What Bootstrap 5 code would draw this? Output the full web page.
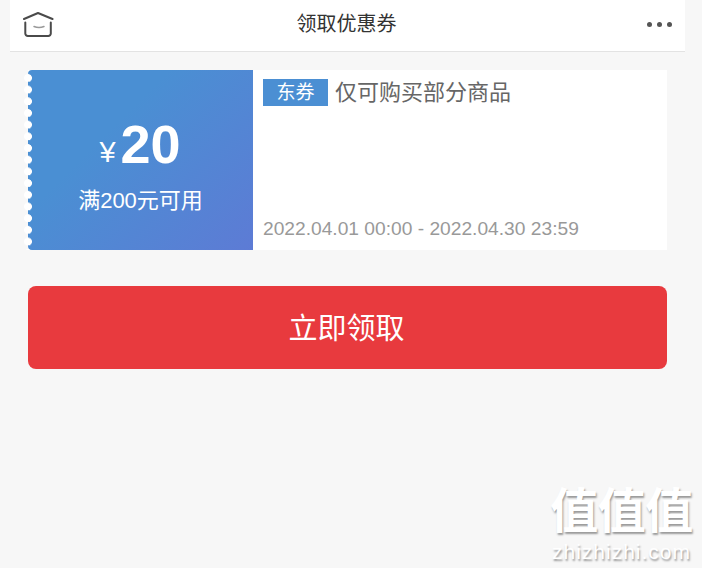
<!DOCTYPE html>
<html lang="zh"><head><meta charset="utf-8">
<link href="https://cdn.jsdelivr.net/npm/bootstrap@5.3.0/dist/css/bootstrap.min.css" rel="stylesheet">
<style>
html,body{height:100%}
body{background:#f7f7f7;font-family:"Liberation Sans","Noto Sans CJK SC",sans-serif;width:702px;height:568px;overflow:hidden;position:relative}
.topbar{margin:0 17px 0 10px;height:52px;background:#fff;border-bottom:1px solid #e3e3e3;padding:0 13px 0 13px}
.topbar-title{font-size:20px;color:#333;line-height:48px;padding-right:2px}
.topbar-side{width:32px;height:48px}
.dots-row{gap:5px}
.dot3{width:5px;height:5px;border-radius:50%;background:#555}
.ticket{margin:18px 35px 0 28px;height:180px;background:#fff}
.ticket-left{width:225px;background:linear-gradient(135deg,#4a8fd3 35%,#5d7bd5 100%);border-radius:4px 0 0 4px;position:relative;color:#fff}
.ticket-left::before{content:"";position:absolute;left:-4px;top:0;bottom:0;width:9px;background:radial-gradient(circle at 4px 8px,#fff 3.600px,transparent 4.300px) 0 0/9px 11.7px repeat-y}
.yen{font-size:29px;line-height:1;margin-right:5px;margin-top:18px;margin-left:-1px}
.amount{font-size:54px;font-weight:700;line-height:56px}
.min-use{font-size:22px;line-height:28px;margin-top:15px}
.ticket-left>.d-flex{margin-top:10px}
.ticket-right{padding:9px 0 9px 10px}
.tag{background:#4b8fd3;color:#fff;font-size:19px;width:65px;height:27px;line-height:28px;text-align:center}
.ticket-name{font-size:22px;color:#666;line-height:27px;margin-left:7px}
.dates{font-size:19.2px;color:#999;line-height:24px;margin-top:auto}
.take{display:block;margin:36px 35px 0 28px;width:639px;height:83px;background:#e83a3e;border:0;border-radius:8px;color:#fff;font-size:29px;line-height:83px;padding:2px 2px 0 0}
.take:hover,.take:active{background:#e83a3e!important;color:#fff!important}
.mark-wrap{position:absolute;left:549px;top:488px;width:145px;color:#fff;text-shadow:1px 2px 2px rgba(0,0,0,.38);text-align:center}
.mark-cn{font-size:48px;line-height:48px;font-family:"Liberation Sans","Noto Sans CJK SC",sans-serif;font-weight:700;letter-spacing:-.5px;white-space:nowrap}
.mark-en{font-size:21px;line-height:22px;letter-spacing:1px;margin-top:5px;white-space:nowrap}
</style></head><body>
<header class="topbar d-flex align-items-start justify-content-between">
<div class="topbar-side d-flex align-items-center">
<svg width="32" height="28" viewBox="0 0 32 28" fill="none" stroke="#4a4a4a" stroke-width="2" stroke-linecap="round" stroke-linejoin="round"><path d="M1 9 15 3 29.500 9" /><path d="M3.500 12.500V23.500a2.500 2.500 0 0 0 2.500 2.500H26.500A2.500 2.500 0 0 0 29 23.500V12.500" transform="translate(-1.200 0)" /><path d="M11 16.500Q16 18.500 21 16.500" stroke="#999" stroke-width="1.500"/></svg>
</div>
<div class="topbar-title">领取优惠券</div>
<div class="topbar-side d-flex align-items-center justify-content-end dots-row"><span class="dot3"></span><span class="dot3"></span><span class="dot3"></span></div>
</header>
<section class="ticket d-flex">
<div class="ticket-left d-flex flex-column align-items-center justify-content-center">
<div class="d-flex align-items-center"><span class="yen">¥</span><span class="amount">20</span></div>
<div class="min-use">满200元可用</div>
</div>
<div class="ticket-right flex-grow-1 d-flex flex-column">
<div class="d-flex align-items-center"><span class="tag">东券</span><span class="ticket-name">仅可购买部分商品</span></div>
<div class="dates">2022.04.01 00:00 - 2022.04.30 23:59</div>
</div>
</section>
<button class="btn take" type="button">立即领取</button>
<div class="mark-wrap"><div class="mark-cn">值值值</div><div class="mark-en">zhizhizhi.com</div></div>
</body></html>
